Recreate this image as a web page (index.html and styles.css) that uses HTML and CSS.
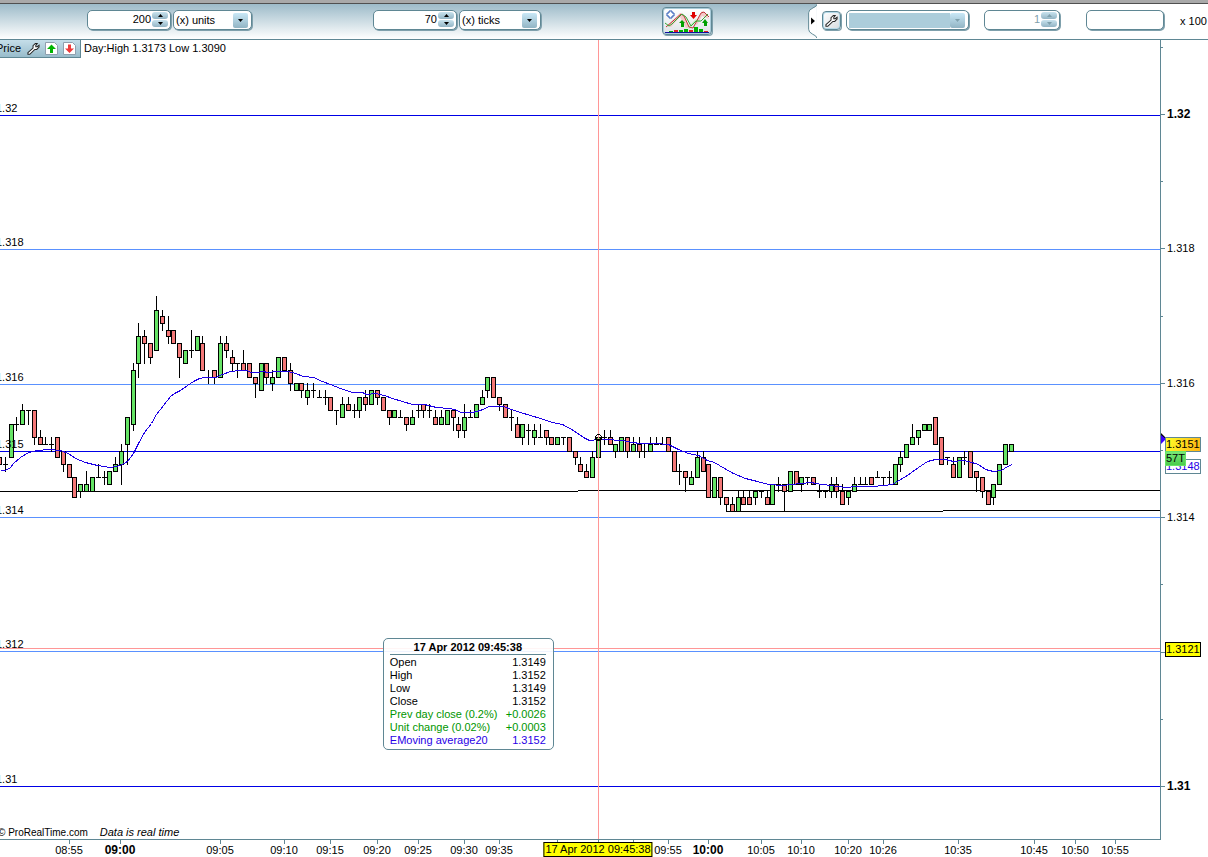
FILE: index.html
```html
<!DOCTYPE html>
<html lang="en">
<head>
<meta charset="utf-8">
<title>ProRealTime chart</title>
<link rel="stylesheet" href="styles.css">
</head>
<body>
<svg class="defs" aria-hidden="true">
  <symbol id="wrench" viewBox="0 0 14 14"><path d="M1 11.5 6.500 6.500 6.500 4 9 1.500 11 1.500 9.500 3.500 9.500 5 11 5 13 3.500 13 5.500 10.500 8 8.500 8 3 13.300 1 13.300Z" fill="#fff" stroke="#222" stroke-width="1.100"/></symbol>
  <symbol id="up" viewBox="0 0 5 3"><path d="M0 3h5L2.500 0z" fill="currentColor"/></symbol>
  <symbol id="down" viewBox="0 0 5 3"><path d="M0 0h5L2.500 3z" fill="currentColor"/></symbol>
</svg>
<div class="titlebar"></div>
<header class="toolbar">
  <div class="tools">
    <div class="pair">
      <div class="field spin"><input type="text" value="200" aria-label="Number of units"><span class="steps"><button aria-label="More units"><svg><use href="#up"/></svg></button><button aria-label="Fewer units"><svg><use href="#down"/></svg></button></span></div>
      <div class="field drop"><select aria-label="Unit type"><option>(x) units</option></select><span class="arrow"><svg><use href="#down"/></svg></span></div>
    </div>
    <div class="pair">
      <div class="field spin"><input type="text" value="70" aria-label="Number of ticks"><span class="steps"><button aria-label="More ticks"><svg><use href="#up"/></svg></button><button aria-label="Fewer ticks"><svg><use href="#down"/></svg></button></span></div>
      <div class="field drop wide"><select aria-label="Tick type"><option>(x) ticks</option></select><span class="arrow"><svg><use href="#down"/></svg></span></div>
    </div>
    <button class="indicators" aria-label="Add indicator">
      <svg viewBox="0 0 46 24">
        <path d="M3 17 16 4l3 1 6 14-3 0-6-11L7 18zM31 15l7-13 4 3 3 5-7-3-5 9z" fill="#f3c9c9"/>
        <path d="M21 8 25 17l7-7 5 3-6 0-6 8z" fill="#c4edc4"/>
        <path d="M2 18 17 5l3 2 5 11 4 1 8-15 3-1 5 5" fill="none" stroke="#c23636"/>
        <path d="M1 14l4 3 3-2 10-10 4 3 5 9 5-5 5 0 7-7" fill="none" stroke="#35a935"/>
        <path d="M5 2h3v2h2v3H8v2H5V7H3V4h2z" fill="#fff" stroke="#2856b4"/>
        <path d="M28 3h3v3h2l-3.500 4L26 6h2z" fill="#e00000"/>
        <path d="M18 11l3 3h-1v4h-3v-4h-2zM41 10l3 4h-1v3h-3v-3h-2z" fill="#00a000"/>
        <path d="M5 22h4v1H5zM15 21h4v2h-4zM20 20h4v3h-4zM30 18h4v5h-4zM35 20h4v3h-4z" fill="#00b400"/>
        <path d="M10 21h4v2h-4zM25 21h4v2h-4zM40 22h4v1h-4z" fill="#e02020"/>
        <path d="M1 23.500h44" stroke="#1010a0"/>
      </svg>
    </button>
  </div>
  <div class="orders">
    <svg class="notch" viewBox="0 0 9 36"><path d="M9 .5Q9 2.500 5 4 .5 6 .5 9v17q0 3 4 5 4 1.500 4.500 4" fill="#fff" stroke="#5f8794"/><path d="M3 14v7l4-3.500z" fill="#000"/></svg>
    <button class="wrench" aria-label="Order settings"><svg><use href="#wrench"/></svg></button>
    <div class="field drop account"><select aria-label="Account" disabled><option></option></select><span class="arrow"><svg><use href="#down"/></svg></span></div>
    <div class="field spin off"><input type="text" value="1" aria-label="Quantity" disabled><span class="steps"><button aria-label="More" disabled><svg><use href="#up"/></svg></button><button aria-label="Less" disabled><svg><use href="#down"/></svg></button></span></div>
    <div class="field amount"><input type="text" id="amount"></div>
    <label for="amount">x 100</label>
  </div>
</header>
<main class="chart">
  <section class="plot" id="plot">
    <svg class="canvas" id="canvas" viewBox="0 0 1160 799" preserveAspectRatio="none" role="img" aria-label="Candlestick price chart"></svg>
    <div class="legend">
      <div class="price"><span>Price</span>
        <button aria-label="Price settings"><svg class="ic"><use href="#wrench"/></svg></button>
        <button aria-label="Move up"><svg class="ic" viewBox="0 0 13 13"><path d="M.5.500h9l3 3v9H.5z" fill="#fff" stroke="#8f9fae"/><path d="M6.500 2.500 11 7H8v4H5V7H2z" fill="#00b400"/></svg></button>
        <button aria-label="Move down"><svg class="ic" viewBox="0 0 13 13"><path d="M.5.500h9l3 3v9H.5z" fill="#fff" stroke="#8f9fae"/><path d="M6.500 11 11 6.500H8v-4H5v4H2z" fill="#ee3a3a"/></svg></button>
      </div>
      <span>Day:High 1.3173 Low 1.3090</span>
    </div>
    <table class="info">
      <caption>17 Apr 2012 09:45:38</caption>
      <tr><th>Open</th><td>1.3149</td></tr>
      <tr><th>High</th><td>1.3152</td></tr>
      <tr><th>Low</th><td>1.3149</td></tr>
      <tr><th>Close</th><td>1.3152</td></tr>
      <tr class="gain"><th>Prev day close (0.2%)</th><td>+0.0026</td></tr>
      <tr class="gain"><th>Unit change (0.02%)</th><td>+0.0003</td></tr>
      <tr class="average"><th>EMoving average20</th><td>1.3152</td></tr>
    </table>
    <footer class="credit"><small>© ProRealTime.com</small><em>Data is real time</em></footer>
  </section>
  <aside class="prices" id="prices"></aside>
  <div class="times" id="times"></div>
</main>
<script src="chart.js"></script>
</body>
</html>
```
FILE: styles.css
```css
* { box-sizing: border-box; }
body {
  margin: 0;
  min-height: 100vh;
  display: flex;
  flex-direction: column;
  overflow: hidden;
  background: #fff;
  color: #000;
  font: 11px/13px "Liberation Sans", Arial, sans-serif;
}
button, input, select { font: inherit; color: inherit; margin: 0; padding: 0; border: 0; background: none; }
.defs { position: absolute; width: 0; height: 0; }
.titlebar { height: 4px; background: #a9a9a9; border-bottom: 1px solid #505050; }

.toolbar { display: flex; justify-content: space-between; height: 36px; border-bottom: 1px solid #5f8794; }
.tools {
  flex: 1;
  display: flex;
  align-items: flex-start;
  gap: 121px;
  padding: 6px 0 0 87px;
  background: linear-gradient(#9dbbc9, #fff);
}
.pair { display: flex; gap: 2px; }
.field {
  display: flex;
  align-items: center;
  height: 20px;
  background: #fff;
  border: 1px solid #5f8794;
  border-radius: 5px;
  box-shadow: 1px 1px 0 #7fa0ac;
}
.field input { flex: 1; min-width: 0; width: 100%; text-align: right; }
.spin { width: 84px; padding: 0 2px 1px 4px; }
.drop { width: 79px; padding: 0 3px 0 2px; }
.wide { width: 82px; }
.drop select { flex: 1; min-width: 0; appearance: none; }
.drop select:disabled { opacity: 1; }
.steps { display: flex; flex-direction: column; gap: 1px; margin-left: 1px; }
.steps button {
  width: 16px;
  height: 7px;
  display: grid;
  place-items: center;
  border-radius: 3px;
  background: linear-gradient(#c9e3ee, #92b4c4);
}
.steps svg, .arrow svg { width: 5px; height: 3px; }
.arrow { width: 15px; height: 15px; display: grid; place-items: center; border-radius: 2px; background: linear-gradient(#c9e8f6, #92b4c4); }
.indicators {
  width: 50px;
  height: 28px;
  margin-top: -3px;
  padding: 1px;
  border: 1px solid #5f8794;
  border-radius: 4px;
  background: linear-gradient(#fff, #dfe3e6);
  box-shadow: inset 0 0 0 1px #a9cbd9, 1px 1px 0 #7fa0ac;
}
.indicators svg { display: block; width: 46px; height: 24px; }

.orders { display: flex; align-items: flex-start; width: 400px; padding-top: 6px; }
.notch { width: 9px; height: 35px; margin: -6px 5px 0 0; background: linear-gradient(#9dbbc9, #fff); }
.wrench {
  width: 19px;
  height: 19px;
  margin: 1px 5px 0 0;
  padding: 2px;
  border: 1px solid #5f8794;
  border-radius: 4px;
  background: linear-gradient(135deg, #fff, #d7dcdf);
  box-shadow: inset 0 0 0 1px #b5d9e8, 1px 1px 0 #7fa0ac;
}
.wrench svg { display: block; width: 13px; height: 13px; }
.account { width: 123px; margin-right: 15px; }
.account select { height: 15px; background: #accddb; }
.account .arrow, .off { color: #7fa0ac; }
.off { width: 76px; margin-right: 26px; }
.amount { width: 78px; margin-right: 16px; padding: 0 4px; }
.orders label { padding-top: 5px; white-space: nowrap; }

.chart { flex: 1; display: grid; grid-template: 1fr 17px / 1fr 47px; }
.plot { position: relative; display: flex; flex-direction: column; overflow: hidden; border: solid #5f8794; border-width: 0 1px 1px 0; }
.canvas { position: absolute; inset: 0; width: 100%; height: 100%; shape-rendering: crispEdges; }
.grid-major { stroke: #0000e6; }
.grid-minor { stroke: #5a91ff; }
.level { stroke: #000; fill: none; }
.wick { stroke: #000; }
.rise { fill: #66e466; stroke: #000; }
.fall { fill: #f47878; stroke: #000; }
.ema { stroke: #1e00e6; fill: none; }
.cross { stroke: #ff9696; }
.target { stroke: #000; fill: none; }

.legend { position: relative; display: flex; gap: 3px; line-height: 17px; }
.price {
  display: flex;
  gap: 5px;
  width: 84px;
  height: 18px;
  margin-left: -3px;
  padding-right: 4px;
  align-items: center;
  justify-content: flex-end;
  border: solid #5f8794;
  border-width: 0 1px 1px 0;
  background: linear-gradient(#c5dee9, #98bccb);
}
.price span { margin-right: 1px; }
.price button { display: block; }
.ic { display: block; width: 13px; height: 13px; }

.info {
  position: absolute;
  left: 33%;
  top: 598px;
  display: flex;
  flex-direction: column;
  width: 171px;
  padding: 2px 7px 2px 6px;
  border: 1px solid #5f8794;
  border-radius: 5px;
  background: rgba(255, 255, 255, .9);
}
.info caption { display: block; height: 14px; font-weight: bold; border-bottom: 1px solid #5f8794; margin-bottom: 1px; }
.info tbody { display: block; }
.info tr { display: flex; justify-content: space-between; }
.info th { font-weight: normal; text-align: left; padding: 0; white-space: nowrap; }
.info td { padding: 0; }
.gain { color: #009600; }
.average { color: #2800e6; }
.credit { position: relative; display: flex; gap: 12px; margin: auto 0 0 -2px; }
.credit small { font-size: 10px; }

.gridlabel { position: absolute; left: -4px; transform: translateY(-13px); }
.prices, .times { position: relative; }
.tick { position: absolute; background: #5f8794; }
.prices .tick { left: 0; width: 2px; height: 1px; }
.prices .tick.long { width: 4px; }
.times .tick { top: 0; width: 1px; height: 4px; }
.scale { position: absolute; white-space: nowrap; }
.prices .scale { left: 6px; transform: translateY(-50%); }
.times .scale { top: 4px; transform: translateX(-50%); }
.strong { font-size: 12px; font-weight: bold; }
.tag { position: absolute; left: 4px; height: 15px; border: 1px solid #5f8794; background: #fff; }
.tag.ma { color: #2800e6; }
.tag.last { background: linear-gradient(110deg, #ffff28, #ffb414); }
.tag.count { border-color: #66e466; background: linear-gradient(#78e878, #4ccc4c); }
.tag.cursor { background: #ff0; border-color: #000; }
.times .tag { left: auto; top: 2px; transform: translateX(-50%); padding: 0 1px; white-space: nowrap; }
.marker { position: absolute; left: 0; width: 5px; height: 11px; }
```
FILE: chart.js
```js
// Candles as "open high low close", in pips above 1.3100
const CANDLES = `49 49 48 48,48 49 47 48,49 54 49 54,54 55 53 54,54 57 54 56,56 56 54 56,56 56 51 52,52 53 51 51,51 52 51 51,51 52 50 51,
52 52 49 49,50 50 47 48,48 48 46 46,46 46 43 43,44 45 43 45,44 47 44 45,44 46 44 46,46 48 46 46,46 47 45 46,45 47 45 47,47 49 47 48,
48 51 45 50,51 55 48 55,54 63 53 62,63 69 61 67,67 68 63 66,66 66 63 64,65 73 65 71,70 71 68 69,68 70 66 67,68 68 66 66,66 66 61 64,
63 65 63 65,65 68 64 65,65 67 65 67,66 67 62 62,61 62 60 61,62 62 60 61,61 67 61 66,66 67 64 65,64 65 62 63,63 63 61 63,63 65 62 62,
63 63 61 61,61 61 58 60,59 63 59 63,63 63 60 61,60 62 59 61,61 64 61 64,64 64 62 62,62 63 59 60,59 60 59 60,60 60 58 59,58 60 57 59,
59 60 58 59,58 59 58 58,58 59 57 58,58 58 56 56,56 56 54 56,55 58 55 57,57 58 56 56,56 57 55 56,56 58 55 58,58 59 56 57,57 59 57 59,
59 59 57 58,58 58 56 56,56 56 54 55,55 56 55 56,55 56 55 55,55 55 53 54,54 56 54 55,56 57 55 56,57 57 55 56,56 57 55 56,55 56 54 54,
54 56 54 55,54 56 54 56,56 56 53 55,54 55 52 53,53 57 52 55,55 56 55 55,55 57 55 57,57 59 57 58,59 61 58 61,61 61 58 58,58 58 56 57,
57 57 55 55,55 56 53 55,54 55 52 52,52 54 51 54,53 54 51 53,52 54 51 53,52 54 52 52,53 53 51 52,52 52 51 51,51 52 51 52,52 52 51 52,
52 52 50 50,50 50 48 49,48 49 47 47,47 48 46 46,46 50 46 49,49 52 49 52,52 53 51 52,52 53 51 51,50 51 49 51,50 52 50 52,52 52 49 50,
50 52 50 51,51 52 49 50,50 51 49 50,50 52 50 51,51 52 51 51,51 52 51 51,52 52 50 50,50 50 47 47,47 48 45 47,47 47 44 46,45 47 45 46,
46 50 46 49,49 50 47 47,48 48 43 43,43 46 43 46,46 46 42 43,43 43 41 42,42 43 41 41,41 44 41 43,43 44 42 42,43 44 42 42,43 44 42 44,
44 44 43 44,43 44 42 42,42 45 42 45,45 46 44 45,45 45 41 44,44 47 44 47,47 47 45 45,45 46 44 46,46 46 45 46,46 46 45 45,44 45 43 44,
44 44 43 44,44 46 43 45,45 46 43 44,44 45 42 42,43 44 42 44,44 46 44 45,45 46 45 45,45 46 45 45,46 46 45 45,46 47 46 46,46 46 45 46,
46 47 45 46,45 48 45 48,48 50 47 49,49 51 49 51,51 54 51 52,52 53 51 53,53 54 53 54,53 54 53 54,55 55 51 51,52 52 48 48,49 49 48 49,
48 49 46 46,46 49 46 49,49 50 48 49,50 50 46 46,47 47 44 46,46 46 43 44,44 44 42 42,43 45 42 45,45 48 45 48,48 51 48 51,50 51 50 51`
  .split(",").map(c => c.trim().split(" ").map(Number));

const EMA = "0,430 5,430 10,427 13,423 20,417 28,412 37,410 48,409 60,410 68,413 75,418 85,422 97,425 110,427 120,425 127,421 133,413 138,403 144,392 151,383 156,374 163,365 170,356 174,353 180,350 187,345 193,341 199,338 205,337 215,337 222,334 230,331 240,330 247,330 250,332 257,332 262,331 268,332 275,331 288,331 295,333 303,336 313,337 322,341 330,344 340,348 352,352 362,352 366,354 375,353 384,355 392,358 402,361 412,364 424,364 436,367 448,368 455,369 460,372 472,372 480,370 489,366 503,366 511,369 520,372 530,375 540,378 552,382 562,384 573,390 583,397 589,400 598,399 605,399 622,400 632,402 640,403 655,403 668,404 678,409 688,413 698,415 707,420 714,422 724,428 733,433 745,438 757,441 768,444 782,445 792,444 800,443 811,442 815,443 830,445 845,447 856,446 873,446 892,444 895,442 907,435 918,427 927,421 935,419 945,419 953,421 962,420 968,421 978,424 985,429 993,431 1001,430 1007,426 1012,424";

const W = 1160, H = 799;
const priceY = pip => Math.floor(746.5 - 6.71 * pip);
const candleX = i => Math.floor(5.2 + 5.816 * i);
const line = (cls, x1, y1, x2, y2) => `<path class="${cls}" d="M${x1} ${y1}L${x2} ${y2}"/>`;

let art = "";
[[75, "major"], [209, "minor"], [344, "minor"], [411, "major"], [477, "minor"], [611, "minor"], [746, "major"]]
  .forEach(([y, kind]) => art += line("grid-" + kind, 0, y + .5, W, y + .5));
art += `<path class="level" d="M0 451.5H578M578 450.5H${W}M727 471.5H943M943 470.5H${W}"/>`;
CANDLES.forEach(([open, high, low, close], n) => {
  const x = n ? candleX(n - 1) : -1;
  const top = priceY(Math.max(open, close)), bottom = priceY(Math.min(open, close));
  art += line("wick", x + .5, priceY(high), x + .5, priceY(low) + 1);
  art += open === close
    ? line("wick", x - 2, top + .5, x + 3, top + .5)
    : `<rect class="${close > open ? "rise" : "fall"}" x="${x - 1.5}" y="${top + .5}" width="4" height="${bottom - top}"/>`;
});
art += `<polyline class="ema" points="${EMA}" transform="translate(.5 .5)"/>`;
art += line("cross", 598.5, 0, 598.5, H) + line("cross", 0, 608.5, W, 608.5);
art += `<circle class="target" cx="598.500" cy="397.500" r="3"/><path class="target" d="M595 399.500h7"/>`;
document.getElementById("canvas").innerHTML = art;

const yPct = v => (v / H * 100) + "%";
const xPct = v => (v / 1161 * 100) + "%";
const plot = document.getElementById("plot");
[["1.32", 75], ["1.318", 209], ["1.316", 344], ["1.315", 411], ["1.314", 477], ["1.312", 611], ["1.31", 746]]
  .forEach(([t, y]) => plot.insertAdjacentHTML("beforeend", `<span class="gridlabel" style="top:${yPct(y)}">${t}</span>`));

let side = "";
for (let p = 110; p >= 0; p -= 10) {
  const y = 745 - 6.71 * p, labelled = p % 20 === 0 && p <= 100;
  side += `<i class="tick${labelled ? " long" : ""}" style="top:${yPct(y)}"></i>`;
  if (labelled && p !== 20) side += `<span class="scale${p % 100 ? "" : " strong"}" style="top:${yPct(y)}">${(1.31 + p / 10000).toFixed(p % 100 ? 3 : 2)}</span>`;
}
side += `<svg class="marker" style="top:${yPct(393)}" viewBox="0 0 5 11"><path d="M0 0l5 5v2L0 3z"/><path d="M0 2l5 4-5 5z" fill="#3c00ff"/></svg>`;
[["ma", 418, "1.3148"], ["last", 397, "1.3151"], ["count", 410, "57T"], ["cursor", 601, "1.3121"]]
  .forEach(([c, y, t]) => side += `<span class="tag ${c}" style="top:${yPct(y)}">${t}</span>`);
document.getElementById("prices").innerHTML = side;

let foot = "";
[[69, "08:55"], [120, "09:00"], [220, "09:05"], [284, "09:10"], [330, "09:15"], [377, "09:20"], [418, "09:25"], [464, "09:30"], [499, "09:35"], [557, ""], [598, ""], [633, ""],
 [668, "09:55"], [708, "10:00"], [761, "10:05"], [801, "10:10"], [848, "10:20"], [883, "10:26"], [958, "10:35"], [1034, "10:45"], [1075, "10:50"], [1115, "10:55"]]
  .forEach(([x, t]) => foot += `<i class="tick" style="left:${xPct(x)}"></i><span class="scale${t.endsWith(":00") ? " strong" : ""}" style="left:${xPct(x)}">${t}</span>`);
foot += `<span class="tag cursor" style="left:${xPct(598)}">17 Apr 2012 09:45:38</span>`;
document.getElementById("times").innerHTML = foot;
```
